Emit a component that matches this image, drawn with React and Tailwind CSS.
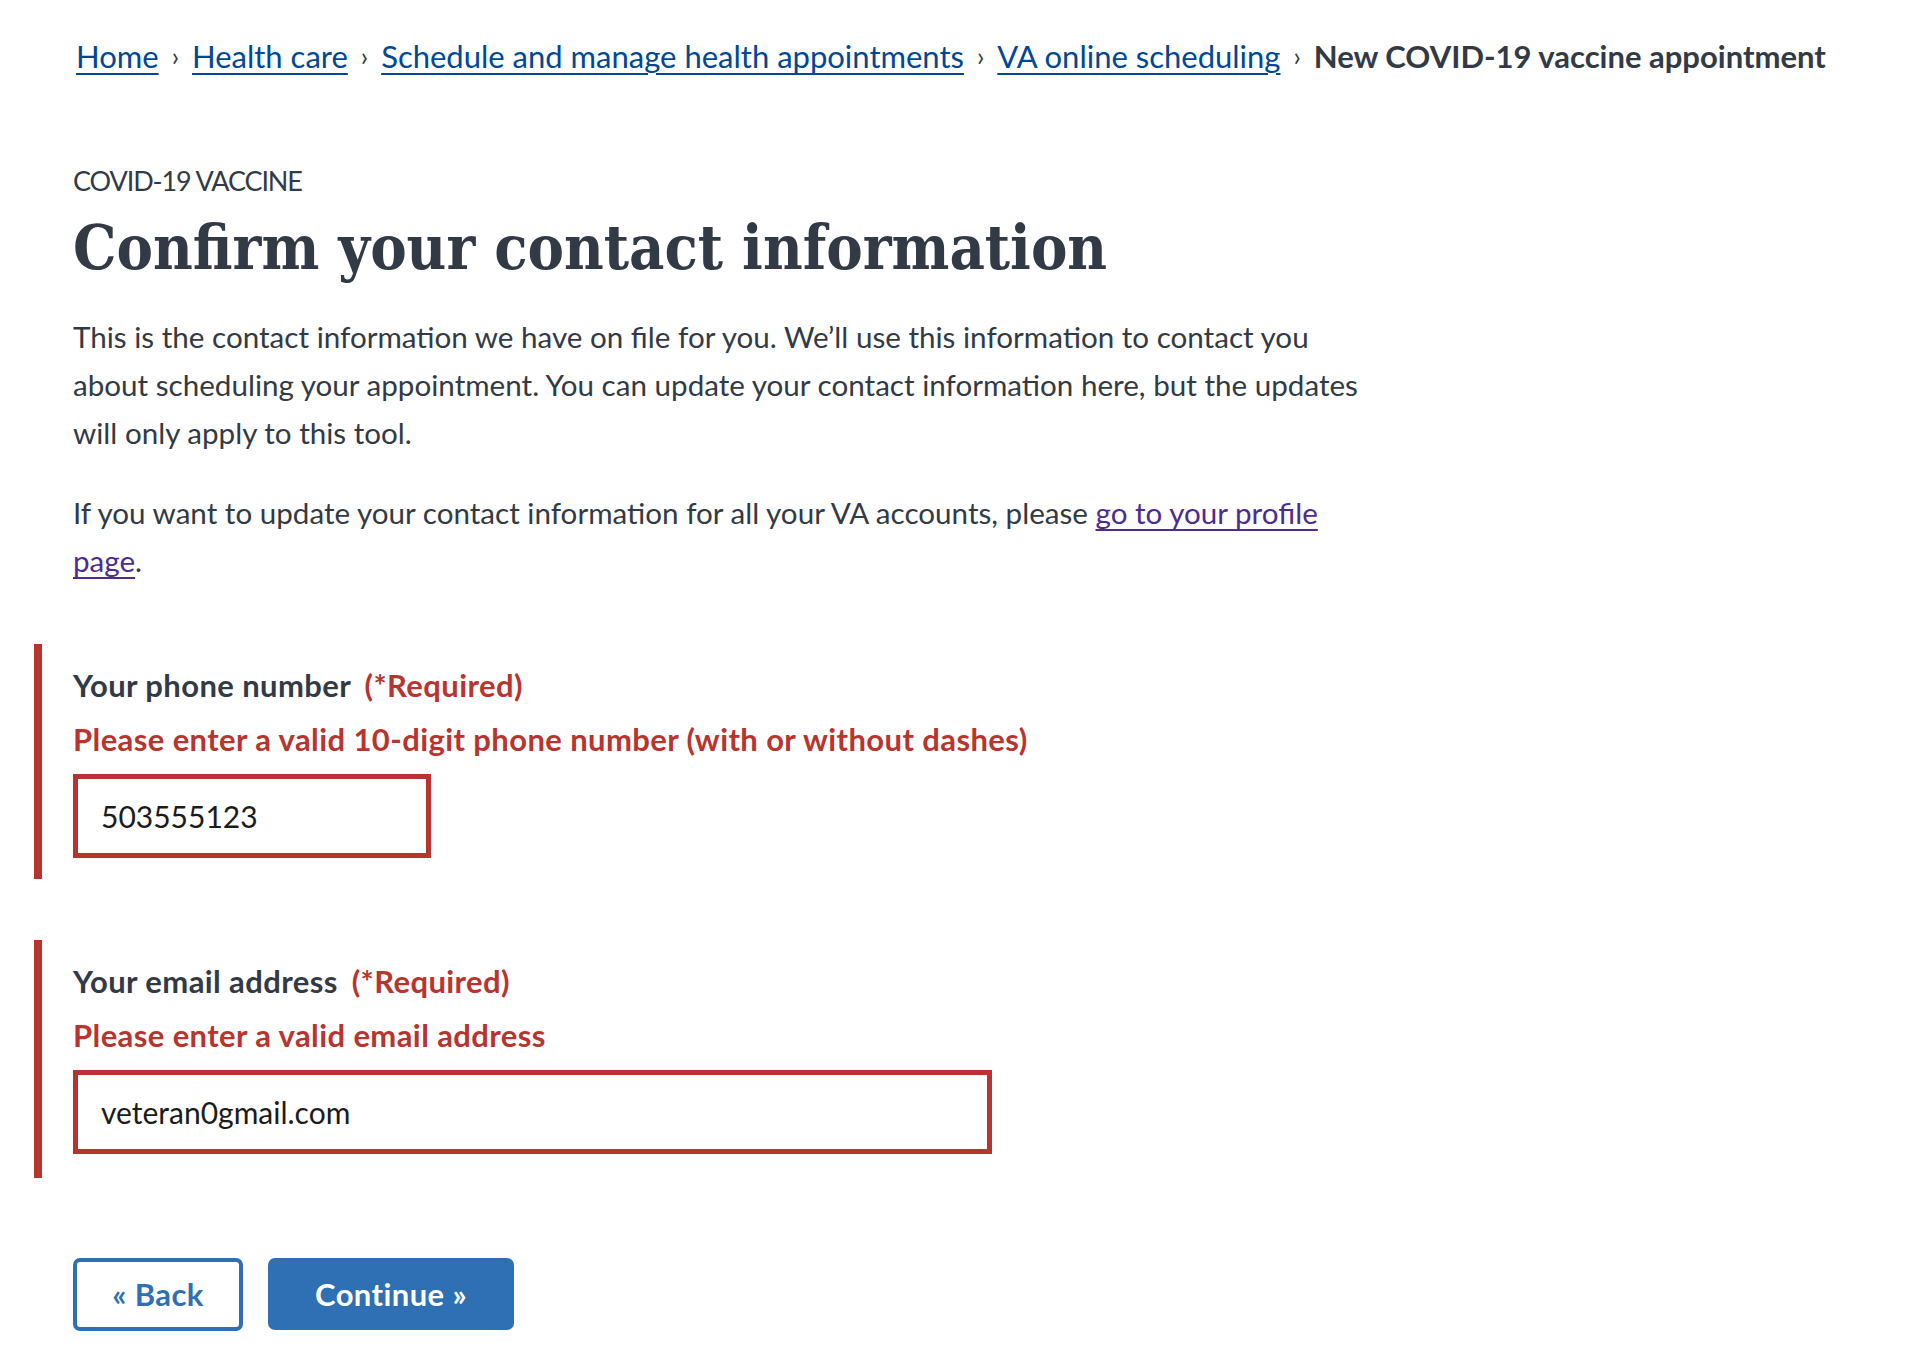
import React from 'react';

const crumbs = [
  'Home',
  'Health care',
  'Schedule and manage health appointments',
  'VA online scheduling',
];

function Breadcrumbs() {
  return (
    <nav className="pl-[76px] pt-[36px]">
      <ol className="flex items-center text-[31px] leading-[40px]">
        {crumbs.map((c) => (
          <li key={c} className="flex items-center">
            <a href="#" className="text-[#004795] underline underline-offset-[5px] decoration-[2px]">
              {c}
            </a>
            <span className="mx-[13px] text-[26px] text-[#323a45]">›</span>
          </li>
        ))}
        <li className="font-bold text-[#323a45]">New COVID-19 vaccine appointment</li>
      </ol>
    </nav>
  );
}

function Field({ label, error, value, width, padBottom }) {
  return (
    <div className={`ml-[-39px] border-l-[8px] border-[#b8342f] pl-[31px] pt-[17px] ${padBottom}`}>
      <label className="block font-bold text-[31px] leading-[48px] tracking-[0.4px]">
        {label} <span className="ml-[6px] text-[#b8342f]">(*Required)</span>
      </label>
      <p className="mt-[6px] font-bold text-[31px] leading-[48px] tracking-[0.4px] text-[#b8342f]">{error}</p>
      <input
        type="text"
        defaultValue={value}
        className={`mt-[11px] block h-[84px] ${width} border-[5px] border-[#b8342f] pl-[23px] text-[30px] text-[#1b1b1b] outline-none`}
      />
    </div>
  );
}

export default function App() {
  return (
    <div className="min-h-screen bg-white text-[#323a45] font-['Lato',sans-serif]">
      <Breadcrumbs />
      <main className="pl-[73px] pb-[40px]">
        <p className="mt-[87px] text-[27px] leading-[36px] tracking-[-1.1px]">COVID-19 VACCINE</p>
        <h1 className="mt-[17px] text-[60.8px] leading-[64px] font-bold font-['DejaVu_Serif_Condensed','DejaVu_Serif',serif]">
          Confirm your contact information
        </h1>
        <div className="max-w-[1345px] text-[29.6px] leading-[48px]">
          <p className="mt-[33px]">
            This is the contact information we have on file for you. We’ll use this information to contact you
            <br />
            about scheduling your appointment. You can update your contact information here, but the updates
            <br />
            will only apply to this tool.
          </p>
          <p className="mt-[32px]">
            If you want to update your contact information for all your VA accounts, please{' '}
            <a href="#" className="text-[#4c2c92] underline underline-offset-[5px] decoration-[2px]">
              go to your profile
              <br />
              page
            </a>
            .
          </p>
        </div>

        <form className="mt-[59px]">
          <Field
            label="Your phone number"
            error="Please enter a valid 10-digit phone number (with or without dashes)"
            value="503555123"
            width="w-[358px]"
            padBottom="pb-[21px]"
          />
          <div className="mt-[61px]">
            <Field
              label="Your email address"
              error="Please enter a valid email address"
              value="veteran0gmail.com"
              width="w-[919px]"
              padBottom="pb-[24px]"
            />
          </div>
          <div className="mt-[80px] flex gap-[25px]">
            <button
              type="button"
              className="h-[73px] w-[170px] rounded-[7px] border-[4px] border-[#2e70b3] bg-white text-[31px] tracking-[0.4px] font-bold text-[#2e70b3]"
            >
              « Back
            </button>
            <button
              type="button"
              className="h-[72px] w-[246px] rounded-[7px] bg-[#2e70b3] text-[31px] tracking-[0.4px] font-bold text-white"
            >
              Continue »
            </button>
          </div>
        </form>
      </main>
    </div>
  );
}
